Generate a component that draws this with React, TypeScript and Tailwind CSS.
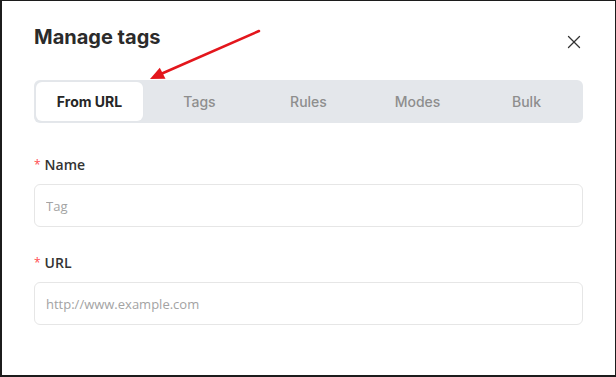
import { X } from "lucide-react";

const tabs = ["From URL", "Tags", "Rules", "Modes", "Bulk"];

function Field({ label, placeholder, className }: { label: string; placeholder: string; className?: string }) {
  return (
    <div className={className}>
      <div className="flex h-[22px] items-center font-['Open_Sans',sans-serif] text-[14px] font-semibold text-[#333]">
        <span className="mr-[4px] mt-[2px] text-[12px] font-normal text-[#ff4d4f]">*</span>
        {label}
      </div>
      <input
        readOnly
        placeholder={placeholder}
        className="mt-[9px] h-[43px] w-full rounded-md border border-[#e6e6e6] px-[11px] font-['Open_Sans',sans-serif] text-[13px] text-[#333] outline-none placeholder:text-[#a3a3a3]"
      />
    </div>
  );
}

export default function App() {
  const active = 0;

  return (
    <div className="relative h-[377px] w-[616px] overflow-hidden border-t border-r border-b-2 border-l-2 border-[#1c1c1c] bg-white pl-[32px] pr-[32px] pt-[22px]">
      {/* header */}
      <div className="flex h-[28px] items-start justify-between">
        <h1 className="font-['Inter',sans-serif] text-[20px] font-bold leading-[28px] text-[#2b2b2b]">Manage tags</h1>
        <button className="-mr-[2px] mt-[8px] text-[#333]">
          <X size={22} strokeWidth={1.4} />
        </button>
      </div>

      {/* tabs */}
      <div className="mt-[29px] grid h-[43px] grid-cols-5 rounded-md bg-[#e4e7eb] p-[2px]">
        {tabs.map((t, i) => (
          <div
            key={t}
            className={`flex items-center justify-center rounded-md font-['Inter',sans-serif] text-[14px] ${
              i === active
                ? "mr-[2px] bg-white font-bold text-[#262626] shadow-[0_0_0_1px_#e3e6ea]"
                : "font-medium text-[#8e8e8e]"
            }`}
          >
            {t}
          </div>
        ))}
      </div>

      <Field label="Name" placeholder="Tag" className="mt-[30px]" />
      <Field label="URL" placeholder="http://www.example.com" className="mt-[24px]" />

      {/* annotation arrow */}
      <svg className="pointer-events-none absolute left-0 top-0" width="616" height="377">
        <line x1="257" y1="30" x2="160" y2="72.5" stroke="#e3161c" strokeWidth="2.5" strokeLinecap="round" />
        <polygon points="148,78 163.5,77.8 157.8,66.8" fill="#e3161c" />
      </svg>
    </div>
  );
}
